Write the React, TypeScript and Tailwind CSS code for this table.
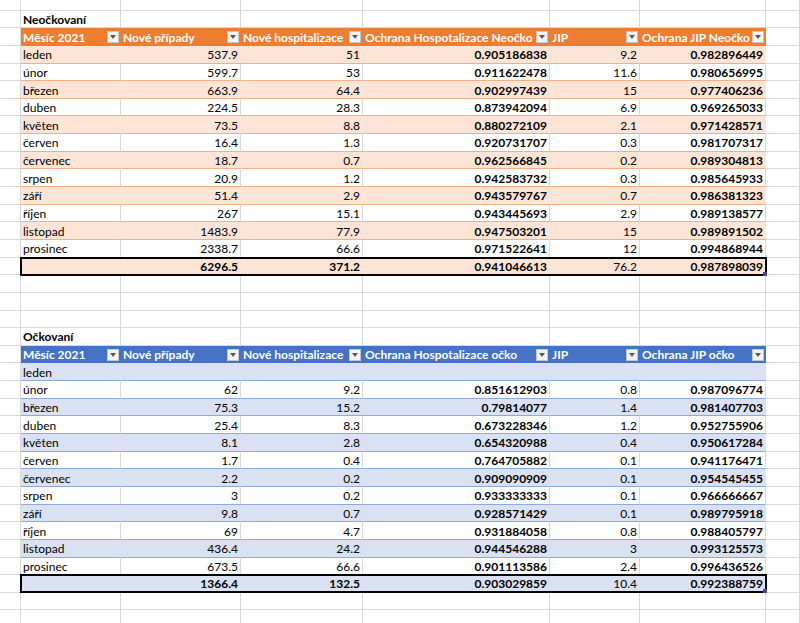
import React from "react";

type Theme = {
  head: string;
  band: string;
  plain: string;
};

const widths = ["w-[21px]", "w-[100px]", "w-[120px]", "w-[122px]", "w-[187px]", "w-[90px]", "w-[126px]", "w-[34px]"];

const orange: Theme = {
  head: "bg-[#ED7D31] border-r-[#ED7D31] border-b-[#ED7D31] text-white font-bold",
  band: "bg-[#FCE4D6] border-r-[#FCE4D6] border-b-[#F4B084]",
  plain: "bg-white border-r-[#D9D9D9] border-b-[#F4B084]",
};

const blue: Theme = {
  head: "bg-[#4472C4] border-r-[#4472C4] border-b-[#4472C4] text-white font-bold",
  band: "bg-[#D9E1F2] border-r-[#D9E1F2] border-b-[#8EA9DB]",
  plain: "bg-white border-r-[#D9D9D9] border-b-[#8EA9DB]",
};

const grid = "border-r-[#D9D9D9] border-b-[#D9D9D9]";

const neockovani: string[][] = [
  ["leden", "537.9", "51", "0.905186838", "9.2", "0.982896449"],
  ["únor", "599.7", "53", "0.911622478", "11.6", "0.980656995"],
  ["březen", "663.9", "64.4", "0.902997439", "15", "0.977406236"],
  ["duben", "224.5", "28.3", "0.873942094", "6.9", "0.969265033"],
  ["květen", "73.5", "8.8", "0.880272109", "2.1", "0.971428571"],
  ["červen", "16.4", "1.3", "0.920731707", "0.3", "0.981707317"],
  ["červenec", "18.7", "0.7", "0.962566845", "0.2", "0.989304813"],
  ["srpen", "20.9", "1.2", "0.942583732", "0.3", "0.985645933"],
  ["září", "51.4", "2.9", "0.943579767", "0.7", "0.986381323"],
  ["říjen", "267", "15.1", "0.943445693", "2.9", "0.989138577"],
  ["listopad", "1483.9", "77.9", "0.947503201", "15", "0.989891502"],
  ["prosinec", "2338.7", "66.6", "0.971522641", "12", "0.994868944"],
];

const ockovani: string[][] = [
  ["leden", "", "", "", "", ""],
  ["únor", "62", "9.2", "0.851612903", "0.8", "0.987096774"],
  ["březen", "75.3", "15.2", "0.79814077", "1.4", "0.981407703"],
  ["duben", "25.4", "8.3", "0.673228346", "1.2", "0.952755906"],
  ["květen", "8.1", "2.8", "0.654320988", "0.4", "0.950617284"],
  ["červen", "1.7", "0.4", "0.764705882", "0.1", "0.941176471"],
  ["červenec", "2.2", "0.2", "0.909090909", "0.1", "0.954545455"],
  ["srpen", "3", "0.2", "0.933333333", "0.1", "0.966666667"],
  ["září", "9.8", "0.7", "0.928571429", "0.1", "0.989795918"],
  ["říjen", "69", "4.7", "0.931884058", "0.8", "0.988405797"],
  ["listopad", "436.4", "24.2", "0.944546288", "3", "0.993125573"],
  ["prosinec", "673.5", "66.6", "0.901113586", "2.4", "0.996436526"],
];

const Cell = ({ col, tone, children, right, bold }: { col: number; tone: string; children?: React.ReactNode; right?: boolean; bold?: boolean }) => (
  <div
    className={`${widths[col]} ${tone} shrink-0 h-full border-r border-b flex items-center whitespace-nowrap pt-[1px] leading-[15px] ${right ? "justify-end pr-[2px]" : "pl-[2px]"} ${bold ? "font-bold" : ""}`}
  >
    {children}
  </div>
);

const FilterButton = () => (
  <span className="ml-auto mr-[1px] flex h-[12px] w-[12px] shrink-0 items-center justify-center border border-[#C6C6C6] bg-[#F4F4F4]">
    <span className="h-0 w-0 border-x-[3px] border-t-[4px] border-x-transparent border-t-[#5A5A5A]" />
  </span>
);

const EmptyRow = () => (
  <div className="flex h-[17.65px]">
    {widths.map((_, i) => (
      <Cell key={i} col={i} tone={grid} />
    ))}
  </div>
);

const TitleRow = ({ title }: { title: string }) => (
  <div className="flex h-[17.65px]">
    <Cell col={0} tone={grid} />
    <Cell col={1} tone={grid} bold>
      {title}
    </Cell>
    {widths.slice(2).map((_, i) => (
      <Cell key={i} col={i + 2} tone={grid} />
    ))}
  </div>
);

const HeaderRow = ({ theme, headers }: { theme: Theme; headers: string[] }) => (
  <div className="flex h-[17.65px]">
    <Cell col={0} tone={grid} />
    {headers.map((h, i) => (
      <Cell key={i} col={i + 1} tone={theme.head}>
        <span>{h}</span>
        <FilterButton />
      </Cell>
    ))}
    <Cell col={7} tone={grid} />
  </div>
);

const DataRow = ({ theme, row, index }: { theme: Theme; row: string[]; index: number }) => {
  const tone = index % 2 === 0 ? theme.band : theme.plain;
  return (
    <div className="flex h-[17.65px]">
      <Cell col={0} tone={grid} />
      {row.map((v, i) => (
        <Cell key={i} col={i + 1} tone={tone} right={i > 0} bold={i === 3 || i === 5}>
          {v}
        </Cell>
      ))}
      <Cell col={7} tone={grid} />
    </div>
  );
};

const TotalRow = ({ theme, values }: { theme: Theme; values: string[] }) => (
  <div className="relative flex h-[17.65px]">
    <Cell col={0} tone={grid} />
    <Cell col={1} tone={theme.band} />
    {values.map((v, i) => (
      <Cell key={i} col={i + 2} tone={theme.band} right bold={i !== 3}>
        {v}
      </Cell>
    ))}
    <Cell col={7} tone={grid} />
    <div className="pointer-events-none absolute left-[20px] top-[-1px] h-[19px] w-[747px] border-2 border-black" />
    <div className="pointer-events-none absolute left-[763px] top-[14px] h-[4px] w-[4px] bg-[#3A4A8C]" />
  </div>
);

const Table = ({ title, theme, headers, rows, totals }: { title: string; theme: Theme; headers: string[]; rows: string[][]; totals: string[] }) => (
  <>
    <TitleRow title={title} />
    <HeaderRow theme={theme} headers={headers} />
    {rows.map((r, i) => (
      <DataRow key={i} theme={theme} row={r} index={i} />
    ))}
    <TotalRow theme={theme} values={totals} />
  </>
);

export default function App() {
  return (
    <div className="h-[623px] w-[800px] overflow-hidden bg-white text-[12px] text-black" style={{ fontFamily: "Lato, 'Open Sans', sans-serif" }}>
      <div className="mt-[-7px]">
        <EmptyRow />
        <Table
          title="Neočkovaní"
          theme={orange}
          headers={["Měsíc 2021", "Nové případy", "Nové hospitalizace", "Ochrana Hospotalizace Neočko", "JIP", "Ochrana JIP Neočko"]}
          rows={neockovani}
          totals={["6296.5", "371.2", "0.941046613", "76.2", "0.987898039"]}
        />
        <EmptyRow />
        <EmptyRow />
        <EmptyRow />
        <Table
          title="Očkovaní"
          theme={blue}
          headers={["Měsíc 2021", "Nové případy", "Nové hospitalizace", "Ochrana Hospotalizace očko", "JIP", "Ochrana JIP očko"]}
          rows={ockovani}
          totals={["1366.4", "132.5", "0.903029859", "10.4", "0.992388759"]}
        />
        <EmptyRow />
        <EmptyRow />
        <EmptyRow />
      </div>
    </div>
  );
}
